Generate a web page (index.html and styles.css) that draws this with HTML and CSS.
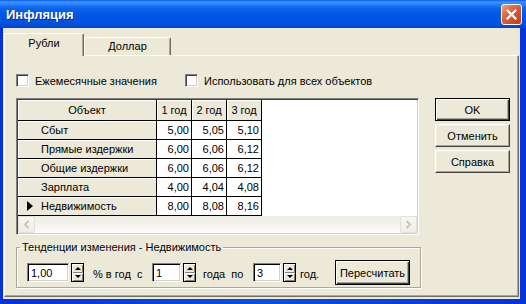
FILE: index.html
```html
<!DOCTYPE html>
<html lang="ru">
<head>
    <meta charset="UTF-8">
    <title>Инфляция</title>
    <link rel="stylesheet" href="styles.css">
</head>
<body>
    <div class="window">
        <div class="titlebar">
            <span class="title">Инфляция</span>
            <span class="close">
                <svg width="11" height="11" viewBox="0 0 11 11">
                    <path d="M1.5 1.5 L9.5 9.5 M9.5 1.5 L1.5 9.5" stroke="#fff" stroke-width="2.2" stroke-linecap="square"/>
                </svg>
            </span>
        </div>

        <div class="client">
            <div class="tabs">
                <div class="tab active">Рубли</div>
                <div class="tab">Доллар</div>
            </div>

            <div class="panel">
                <div class="checks">
                    <label class="check first"><span class="box"></span>Ежемесячные значения</label>
                    <label class="check"><span class="box"></span>Использовать для всех объектов</label>
                </div>

                <div class="main">
                    <div class="grid">
                        <div class="grid-body">
                            <table>
                                <tr class="head">
                                    <td class="fixed center">Объект</td>
                                    <td class="fixed center">1 год</td>
                                    <td class="fixed center">2 год</td>
                                    <td class="fixed center">3 год</td>
                                </tr>
                                <tr>
                                    <td class="fixed name">Сбыт</td>
                                    <td class="num">5,00</td><td class="num">5,05</td><td class="num">5,10</td>
                                </tr>
                                <tr>
                                    <td class="fixed name">Прямые издержки</td>
                                    <td class="num">6,00</td><td class="num">6,06</td><td class="num">6,12</td>
                                </tr>
                                <tr>
                                    <td class="fixed name">Общие издержки</td>
                                    <td class="num">6,00</td><td class="num">6,06</td><td class="num">6,12</td>
                                </tr>
                                <tr>
                                    <td class="fixed name">Зарплата</td>
                                    <td class="num">4,00</td><td class="num">4,04</td><td class="num">4,08</td>
                                </tr>
                                <tr>
                                    <td class="fixed name current">Недвижимость</td>
                                    <td class="num">8,00</td><td class="num">8,08</td><td class="num">8,16</td>
                                </tr>
                            </table>
                        </div>
                        <div class="hscroll">
                            <span class="sbtn">
                                <svg width="7" height="9" viewBox="0 0 7 9"><path d="M5.5 1 L2 4.5 L5.5 8" fill="none" stroke="#c8c6bb" stroke-width="2"/></svg>
                            </span>
                            <span class="track"></span>
                            <span class="sbtn">
                                <svg width="7" height="9" viewBox="0 0 7 9"><path d="M1.5 1 L5 4.5 L1.5 8" fill="none" stroke="#c8c6bb" stroke-width="2"/></svg>
                            </span>
                        </div>
                    </div>

                    <div class="buttons">
                        <button class="btn default">OK</button>
                        <button class="btn">Отменить</button>
                        <button class="btn">Справка</button>
                    </div>
                </div>

                <fieldset class="group">
                    <legend>Тенденции изменения - Недвижимость</legend>
                    <div class="group-row">
                        <span class="edit e1">1,00</span>
                        <span class="spin"><span class="up"></span><span class="down"></span></span>
                        <span class="lbl l1">% в год&nbsp; с</span>
                        <span class="edit e2">1</span>
                        <span class="spin"><span class="up"></span><span class="down"></span></span>
                        <span class="lbl l2">года&nbsp; по</span>
                        <span class="edit e3">3</span>
                        <span class="spin"><span class="up"></span><span class="down"></span></span>
                        <span class="lbl l3">год.</span>
                        <button class="btn default recalc">Пересчитать</button>
                    </div>
                </fieldset>
            </div>
        </div>
    </div>
</body>
</html>
```

FILE: styles.css
```css
* {
    margin: 0;
    padding: 0;
    box-sizing: border-box;
}

body {
    font-family: 'Liberation Sans', Arial, sans-serif;
    font-size: 11px;
    color: #000;
    background: #fff;
}

.window {
    width: 526px;
    height: 304px;
    background: linear-gradient(to right, #0831d9 0, #0a4fe0 50%, #0831d9 100%);
    display: flex;
    flex-direction: column;
}

/* title bar */
.titlebar {
    height: 28px;
    flex: none;
    display: flex;
    align-items: center;
    justify-content: space-between;
    padding: 1px 4px 0 6px;
    background: linear-gradient(to bottom, #0a5ee8 0, #3d95ff 2px, #2a84fb 4px, #0d64ee 8px, #0058e6 14px, #0055e2 20px, #0050da 25px, #0044c4 28px);
}

.title {
    font-family: 'Liberation Sans', Arial, sans-serif;
    font-weight: bold;
    font-size: 13px;
    color: #fff;
    text-shadow: 1px 1px #0b2a8a;
}

.close {
    width: 21px;
    height: 21px;
    border: 1px solid #fff;
    border-radius: 3px;
    background: linear-gradient(135deg, #f0a07f 0%, #e2683f 35%, #d2502a 65%, #c24019 100%);
    display: flex;
    align-items: center;
    justify-content: center;
    margin-top: -1px;
}

/* client area */
.client {
    flex: 1;
    background: #ece9d8;
    margin: 0 6px 5px 3px;
    padding: 5px 1px 2px 1px;
    display: flex;
    flex-direction: column;
}

.tabs {
    height: 22px;
    display: flex;
    align-items: flex-end;
    position: relative;
    z-index: 1;
}

.tab {
    width: 87px;
    height: 18px;
    background: #ece9d8;
    border: 1px solid;
    border-color: #fff #716f64 transparent #fff;
    border-bottom: none;
    border-radius: 2px 2px 0 0;
    box-shadow: inset -1px 0 #aca899;
    display: flex;
    align-items: center;
    justify-content: center;
    padding-bottom: 1px;
}

.tab.active {
    width: 80px;
    height: 23px;
    margin-bottom: -1px;
    padding-bottom: 4px;
}

.panel {
    flex: 1;
    border: 1px solid;
    border-color: #fff #716f64 #716f64 #fff;
    box-shadow: inset -1px -1px #aca899;
    padding-left: 11px;
}

/* checkboxes */
.checks {
    display: flex;
    margin-top: 18px;
    height: 13px;
}

.check {
    display: flex;
    align-items: center;
    gap: 6px;
    white-space: nowrap;
}

.check.first {
    width: 169px;
}

.box {
    width: 13px;
    height: 13px;
    background: #fff;
    border: 1px solid;
    border-color: #808080 #fff #fff #808080;
    box-shadow: inset 1px 1px #404040, inset -1px -1px #d4d0c8;
}

/* grid */
.main {
    display: flex;
    gap: 16px;
    margin-top: 11px;
}

.grid {
    width: 403px;
    height: 137px;
    border: 1px solid;
    border-color: #808080 #fff #fff #808080;
    box-shadow: inset 1px 1px #404040, inset -1px -1px #d4d0c8;
    padding: 1px;
    background: #fff;
    display: flex;
    flex-direction: column;
}

.grid-body {
    flex: 1;
    background: #fff;
    overflow: hidden;
}

table {
    border-collapse: separate;
    border-spacing: 0;
    table-layout: fixed;
    width: 244px;
}

td {
    height: 19px;
    border-right: 1px solid #000;
    border-bottom: 1px solid #000;
    width: 35px;
    white-space: nowrap;
    overflow: hidden;
    vertical-align: middle;
}

td:first-child {
    width: 139px;
}

.head td {
    height: 21px;
}

.fixed {
    background: #ece9d8;
    box-shadow: inset 1px 1px #fff;
}

.center {
    text-align: center;
}

.name {
    padding-left: 23px;
}

.name.current {
    padding-left: 9px;
}

.name.current::before {
    content: '';
    display: inline-block;
    vertical-align: -1px;
    border-left: 6px solid #000;
    border-top: 5px solid transparent;
    border-bottom: 5px solid transparent;
    margin-right: 8px;
}

.num {
    text-align: right;
    padding-right: 2px;
}

.hscroll {
    height: 17px;
    flex: none;
    display: flex;
    background: linear-gradient(to bottom, #eeede5 0, #f3f1ec 40%, #fdfdfa 100%);
}

.track {
    flex: 1;
}

.sbtn {
    width: 17px;
    height: 17px;
    border: 1px solid #e3e1d6;
    border-radius: 2px;
    background: linear-gradient(to bottom, #f7f6f2, #eeede6);
    display: flex;
    align-items: center;
    justify-content: center;
}

/* buttons */
.buttons {
    display: flex;
    flex-direction: column;
    gap: 3px;
}

.btn {
    width: 75px;
    height: 23px;
    font-family: inherit;
    font-size: 11px;
    color: #000;
    background: #ece9d8;
    border: 1px solid;
    border-color: #fff #404040 #404040 #fff;
    box-shadow: inset -1px -1px #aca899, inset 1px 1px #f1efe2;
}

.btn.default {
    border: 1px solid #000;
    box-shadow: inset 1px 1px #fff, inset -1px -1px #404040, inset -2px -2px #aca899;
}

/* group box */
.group {
    width: 405px;
    margin-top: 6px;
    border: 1px solid #aca899;
    box-shadow: 1px 1px 0 #fff, inset 1px 1px 0 #fff;
    padding: 0 0 2px 0;
}

.group legend {
    margin-left: 3px;
    padding: 0 2px;
    line-height: 13px;
}

.group-row {
    display: flex;
    align-items: center;
    height: 25px;
    margin-top: 6px;
    padding-left: 10px;
}

.edit {
    height: 19px;
    background: #fff;
    border: 1px solid;
    border-color: #808080 #fff #fff #808080;
    box-shadow: inset 1px 1px #000, inset -1px -1px #d4d0c8;
    padding: 2px 0 0 3px;
    line-height: 14px;
}

.e1 { width: 42px; }
.e2 { width: 29px; }
.e3 { width: 28px; }

.spin {
    width: 13px;
    height: 19px;
    margin-left: 2px;
    border: 1px solid #000;
    display: flex;
    flex-direction: column;
}

.spin span {
    flex: 1;
    background: #ece9d8;
    box-shadow: inset 1px 1px #fff, inset -1px -1px #808080;
    display: flex;
    align-items: center;
    justify-content: center;
}

.spin .up::after {
    content: '';
    border-left: 3px solid transparent;
    border-right: 3px solid transparent;
    border-bottom: 3px solid #000;
}

.spin .down::after {
    content: '';
    border-left: 3px solid transparent;
    border-right: 3px solid transparent;
    border-top: 3px solid #000;
}

.lbl {
    white-space: nowrap;
    padding-top: 2px;
}

.l1 { width: 59px; margin-left: 9px; }
.l2 { width: 50px; margin-left: 7px; }
.l3 { width: 35px; margin-left: 4px; }

.recalc {
    height: 25px;
}
```
